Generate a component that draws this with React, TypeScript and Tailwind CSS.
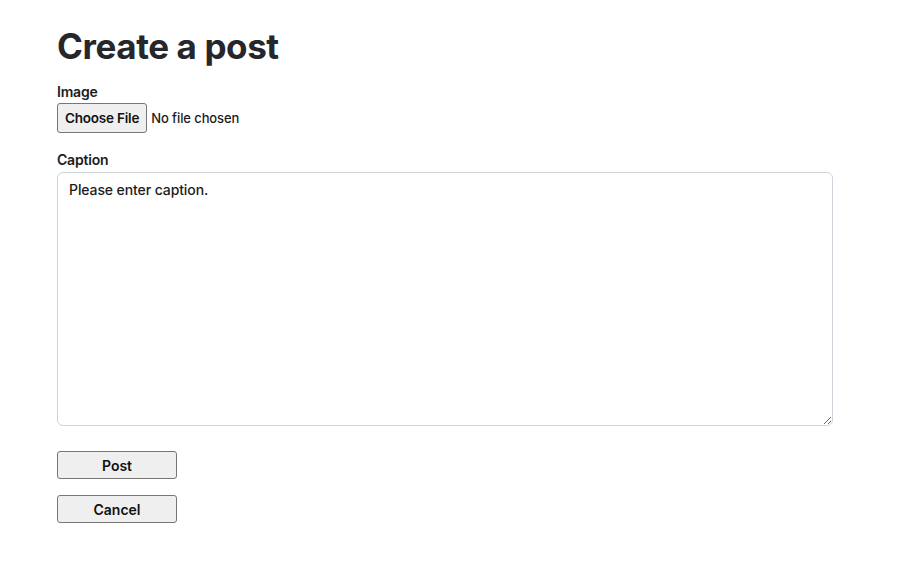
export default function App() {
  return (
    <div className="min-h-[581px] bg-white px-[57px] pt-[24px] text-[#1c1c1c] font-['Inter',sans-serif]">
      <h1 className="text-[35px] font-bold leading-[44px] tracking-[-0.4px] text-[#25272b]">Create a post</h1>
      <form className="mt-[15px] flex flex-col">
        <label className="text-[14px] font-semibold leading-[18px] tracking-[-0.2px]">Image</label>
        <input
          type="file"
          className="mt-[2px] h-[30px] text-[13px] font-medium tracking-[-0.1px] file:mr-[4px] file:h-[30px] file:rounded-[3px] file:border file:border-solid file:border-[#767676] file:bg-[#efefef] file:px-[7px] file:text-[13.5px] file:font-semibold file:tracking-[-0.2px] file:text-[#111]"
        />
        <label className="mt-[18px] text-[14px] font-semibold leading-[18px] tracking-[-0.2px]">Caption</label>
        <textarea
          className="mt-[3px] h-[254px] w-[776px] rounded-[6px] border border-[#ced4da] px-[11px] py-[6px] text-[14px] font-medium tracking-[-0.1px] text-[#111] placeholder:text-[#1c1c1c] outline-none"
          placeholder="Please enter caption."
        />
        <div className="mt-[25px] flex flex-col gap-[16px]">
          <button type="button" className="h-[28px] w-[120px] rounded-[3px] border border-[#767676] bg-[#efefef] text-[14px] font-semibold text-[#111]">Post</button>
          <button type="button" className="h-[28px] w-[120px] rounded-[3px] border border-[#767676] bg-[#efefef] text-[14px] font-semibold text-[#111]">Cancel</button>
        </div>
      </form>
    </div>
  );
}
